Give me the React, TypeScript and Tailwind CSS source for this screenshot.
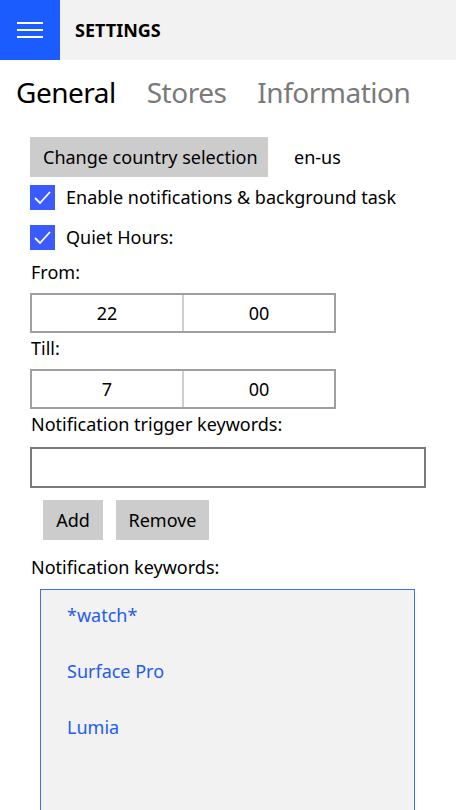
import { useState } from "react";

const FONT = { fontFamily: '"Segoe UI", "Noto Sans", "Open Sans", sans-serif' };

function Check({ label }: { label: string }) {
  return (
    <div className="flex items-center h-[25px] gap-[11px]">
      <span className="w-[25px] h-[25px] bg-[#3b5bff] flex items-center justify-center">
        <svg width="19" height="15" viewBox="0 0 19 15" fill="none">
          <path d="M2 8 L7 13 L17 2" stroke="white" strokeWidth="1.8" />
        </svg>
      </span>
      <span className="text-[18px] text-black">{label}</span>
    </div>
  );
}

function TimePicker({ hour, minute }: { hour: string; minute: string }) {
  return (
    <div className="flex w-[306px] h-[40px] border-2 border-[#9f9f9f]">
      <div className="flex-1 flex items-center justify-center text-[18px] border-r-2 border-[#cfcfcf]">
        {hour}
      </div>
      <div className="flex-1 flex items-center justify-center text-[18px]">{minute}</div>
    </div>
  );
}

export default function App() {
  const [tab] = useState("General");
  const keywords = ["*watch*", "Surface Pro", "Lumia"];

  return (
    <div className="w-[456px] h-[810px] overflow-hidden bg-white text-black" style={FONT}>
      {/* top bar */}
      <div className="flex h-[60px] bg-[#f2f2f2]">
        <div className="w-[60px] h-[60px] bg-[#1a5cff] flex flex-col items-center justify-center gap-[5px]">
          <span className="block w-[26px] h-[2px] bg-white" />
          <span className="block w-[26px] h-[2px] bg-white" />
          <span className="block w-[26px] h-[2px] bg-white" />
        </div>
        <div className="flex items-center pl-[15px] text-[18px] font-bold">SETTINGS</div>
      </div>

      {/* pivot headers */}
      <div className="flex gap-[31px] pl-[16px] pt-[11px] h-[68px] text-[28px] tracking-[-0.5px]">
        {["General", "Stores", "Information"].map((t) => (
          <span key={t} className={t === tab ? "text-black" : "text-[#7a7a7a]"}>
            {t}
          </span>
        ))}
      </div>

      <div className="flex flex-col pl-[30px] pt-[9px]">
        <div className="flex items-center">
          <button className="h-[40px] w-[238px] bg-[#cccccc] text-[18px] text-left pl-[13px]">
            Change country selection
          </button>
          <span className="ml-[26px] text-[18px]">en-us</span>
        </div>

        <div className="mt-[8px]">
          <Check label="Enable notifications & background task" />
        </div>
        <div className="mt-[15px]">
          <Check label="Quiet Hours:" />
        </div>

        <div className="mt-[9px] text-[18px] leading-[26px] pl-[1px]">From:</div>
        <div className="mt-[8px]">
          <TimePicker hour="22" minute="00" />
        </div>
        <div className="mt-[2px] text-[18px] leading-[26px] pl-[1px]">Till:</div>
        <div className="mt-[8px]">
          <TimePicker hour="7" minute="00" />
        </div>

        <div className="mt-[2px] text-[18px] leading-[26px] pl-[1px]">Notification trigger keywords:</div>
        <div className="mt-[10px] w-[396px] h-[41px] border-2 border-[#7a7a7a]" />

        <div className="flex gap-[13px] pl-[13px] mt-[12px]">
          <button className="h-[40px] w-[60px] bg-[#cccccc] text-[18px]">Add</button>
          <button className="h-[40px] w-[93px] bg-[#cccccc] text-[18px]">Remove</button>
        </div>

        <div className="mt-[14px] text-[18px] leading-[26px] pl-[1px]">Notification keywords:</div>
        <div className="mt-[9px] ml-[10px] w-[375px] h-[240px] border border-[#3b72f5] bg-[#f2f2f2] pl-[26px] pt-[12px]">
          {keywords.map((k) => (
            <div key={k} className="h-[56px] text-[18px] text-[#1f5cf0]">
              {k}
            </div>
          ))}
        </div>
      </div>
    </div>
  );
}
